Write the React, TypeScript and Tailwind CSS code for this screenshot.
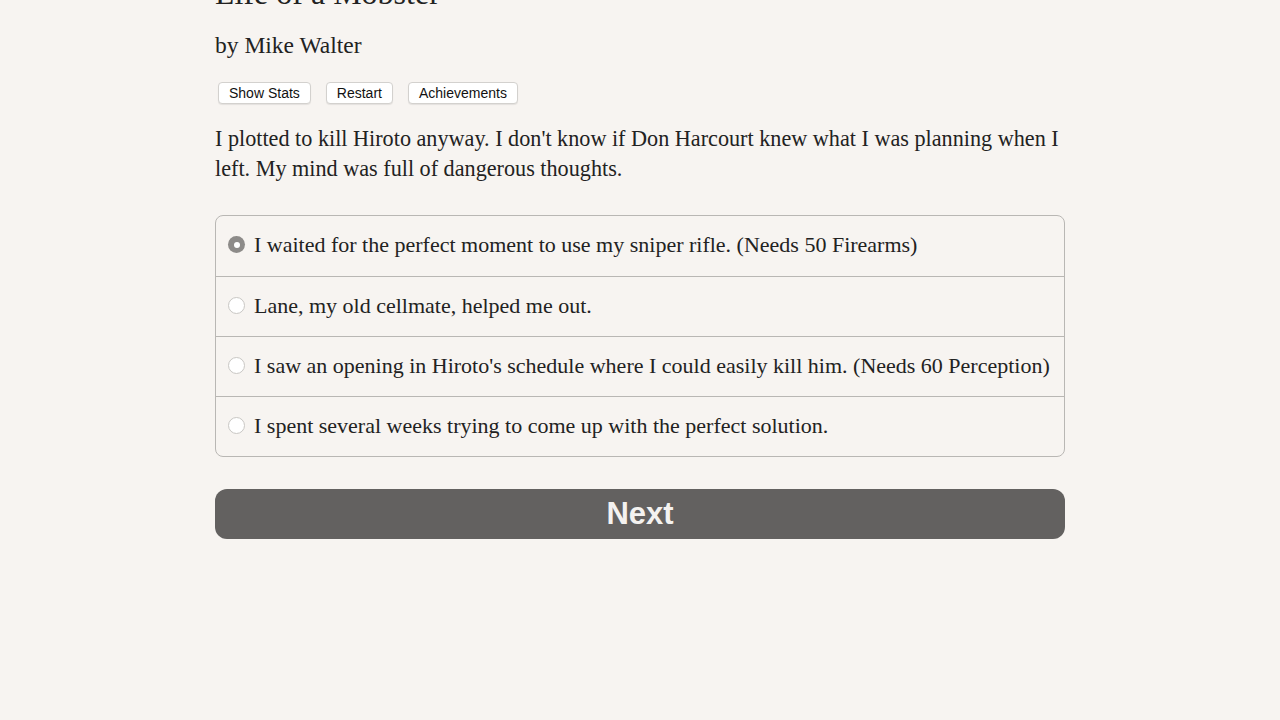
import { useState } from "react"

const serif = { fontFamily: '"Liberation Serif", "Times New Roman", serif' }
const sans = { fontFamily: '"Liberation Sans", Arial, sans-serif' }

const OPTIONS = [
  "I waited for the perfect moment to use my sniper rifle. (Needs 50 Firearms)",
  "Lane, my old cellmate, helped me out.",
  "I saw an opening in Hiroto's schedule where I could easily kill him. (Needs 60 Perception)",
  "I spent several weeks trying to come up with the perfect solution.",
]

function Radio({ checked }: { checked: boolean }) {
  if (checked) {
    return (
      <span className="flex h-[17px] w-[17px] shrink-0 items-center justify-center rounded-full bg-[#8d8b89]">
        <span className="h-[6px] w-[6px] rounded-full bg-white" />
      </span>
    )
  }
  return <span className="h-[17px] w-[17px] shrink-0 rounded-full border border-[#c9c7c4] bg-white" />
}

export default function App() {
  const [choice, setChoice] = useState(0)

  return (
    <div className="min-h-screen overflow-hidden bg-[#f7f4f1] text-[#222]" style={serif}>
      <div className="mx-auto w-[850px]">
        <h1 className="-mt-[25px] text-[32px] leading-[36px]">Life of a Mobster</h1>
        <p className="mt-[19px] text-[23.5px] leading-[30px]">by Mike Walter</p>

        {/* toolbar */}
        <div className="mt-[22px] flex gap-[15px] pl-[3px]" style={sans}>
          {["Show Stats", "Restart", "Achievements"].map(label => (
            <button
              key={label}
              className="h-[22px] rounded-[4px] border border-[#d3d1ce] bg-white px-[10px] text-[14px] leading-[20px] text-[#111] shadow-[0_1px_1px_rgba(0,0,0,0.08)]"
            >
              {label}
            </button>
          ))}
        </div>

        <p className="mt-[20px] text-[22.2px] leading-[30px]">
          I plotted to kill Hiroto anyway. I don't know if Don Harcourt knew what I was planning when I left. My mind
          was full of dangerous thoughts.
        </p>

        {/* choices */}
        <div className="mt-[31px] overflow-hidden rounded-[8px] border border-[#b9b7b4]">
          {OPTIONS.map((opt, i) => (
            <label
              key={i}
              onClick={() => setChoice(i)}
              className={
                "flex h-[60px] cursor-pointer items-center gap-[9px] pb-[3px] pl-[12px] text-[22px] " +
                (i > 0 ? "border-t border-[#b9b7b4]" : "")
              }
            >
              <Radio checked={choice === i} />
              <span>{opt}</span>
            </label>
          ))}
        </div>

        <button
          className="mt-[32px] flex h-[50px] w-full items-center justify-center rounded-[12px] bg-[#636160] text-[31px] font-bold text-[#f4f2f0]"
          style={sans}
        >
          Next
        </button>
      </div>
    </div>
  )
}
